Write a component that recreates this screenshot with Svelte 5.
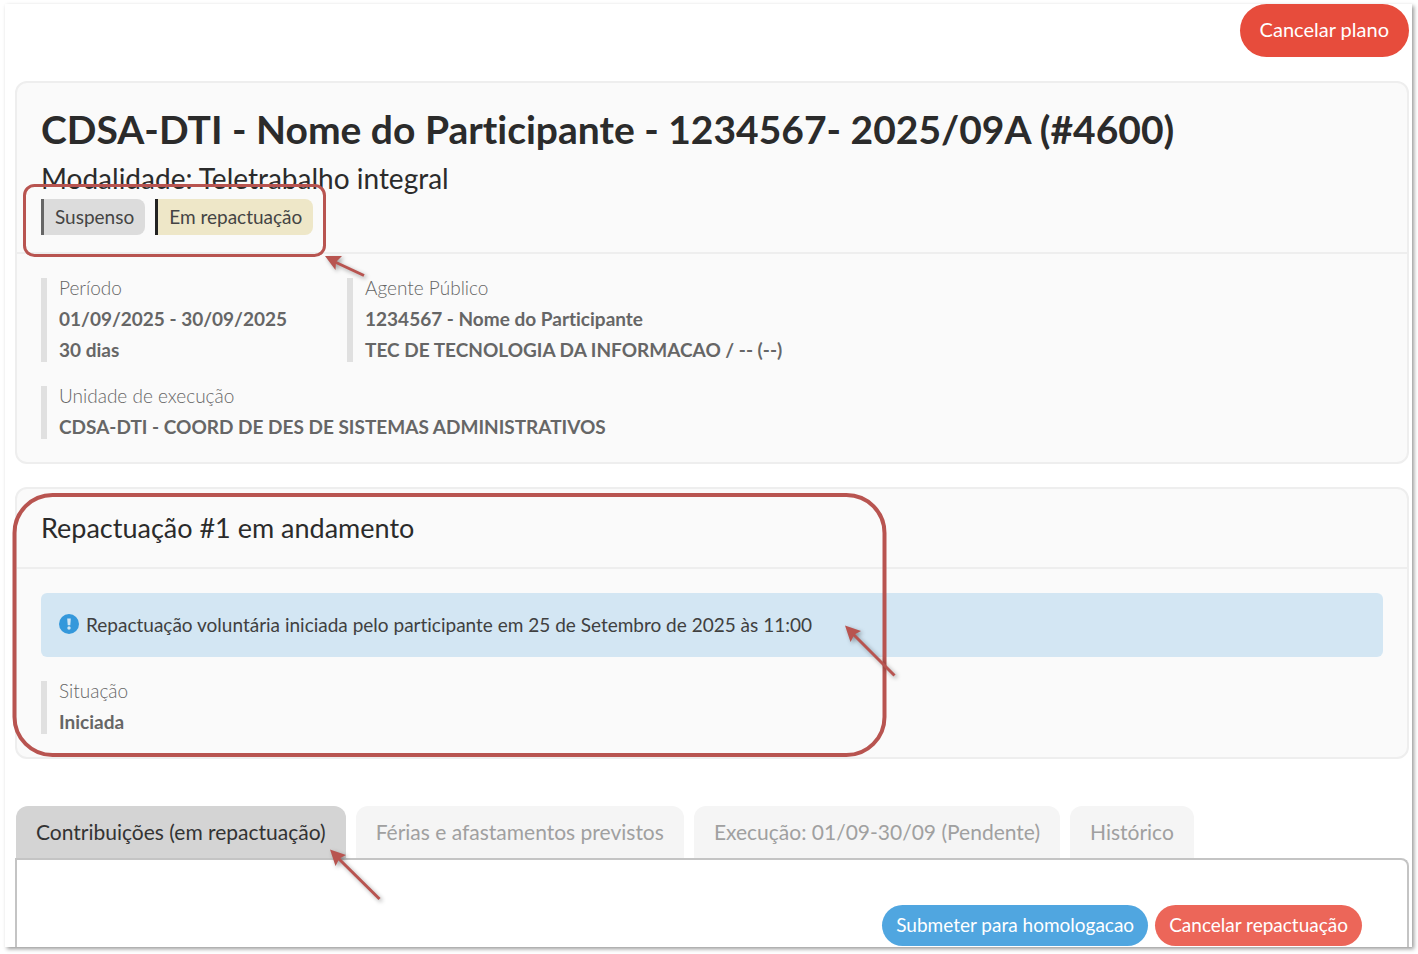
<script>
  const plano = {
    titulo: 'CDSA-DTI - Nome do Participante - 1234567- 2025/09A (#4600)',
    modalidade: 'Modalidade: Teletrabalho integral'
  };

  const campos = [
    [
      { label: 'Período', linhas: ['01/09/2025 - 30/09/2025', '30 dias'] },
      { label: 'Agente Público', linhas: ['1234567 - Nome do Participante', 'TEC DE TECNOLOGIA DA INFORMACAO / -- (--)'] }
    ],
    [
      { label: 'Unidade de execução', linhas: ['CDSA-DTI - COORD DE DES DE SISTEMAS ADMINISTRATIVOS'] }
    ]
  ];

  const situacao = { label: 'Situação', linhas: ['Iniciada'] };

  const abas = [
    'Contribuições (em repactuação)',
    'Férias e afastamentos previstos',
    'Execução: 01/09-30/09 (Pendente)',
    'Histórico'
  ];

  let abaAtiva = $state(0);
</script>

{#snippet campo(item)}
  <dl class="field">
    <dt>{item.label}</dt>
    {#each item.linhas as linha}
      <dd>{linha}</dd>
    {/each}
  </dl>
{/snippet}

<div class="sheet">
  <div class="toolbar">
    <button class="btn btn-large red" type="button">Cancelar plano</button>
  </div>

  <section class="card">
    <header class="plan-header">
      <h1>{plano.titulo}</h1>
      <p class="subtitle">{plano.modalidade}</p>
      <div class="badges">
        <span class="badge">Suspenso</span>
        <span class="badge warning">Em repactuação</span>
      </div>
    </header>
    <div class="card-body">
      {#each campos as linha}
        <div class="row">
          {#each linha as item}
            {@render campo(item)}
          {/each}
        </div>
      {/each}
    </div>
    <svg class="mark" width="360" height="200" aria-hidden="true">
      <rect x="7.5" y="102.5" width="300" height="70" rx="10" stroke-width="3" />
      <g class="arrow">
        <path class="line" d="M347 192.500L318 179" />
        <path class="head" d="M308 173L325 173L319 179L318.500 187Z" />
      </g>
    </svg>
  </section>

  <section class="card">
    <header class="card-header">
      <h2>Repactuação #1 em andamento</h2>
    </header>
    <div class="card-body">
      <div class="message">
        <svg width="20" height="20" viewBox="0 0 20 20" aria-hidden="true">
          <circle cx="10" cy="10" r="10" fill="#3498db" />
          <path d="M8.200 4.500h3.600l-.5 6.800H8.700z" fill="#d3e6f3" />
          <circle cx="10" cy="14" r="1.700" fill="#d3e6f3" />
        </svg>
        <span>Repactuação voluntária iniciada pelo participante em 25 de Setembro de 2025 às 11:00</span>
      </div>
      <div class="row">
        {@render campo(situacao)}
      </div>
    </div>
    <svg class="mark" width="900" height="280" aria-hidden="true">
      <rect x="-2.500" y="6" width="870" height="260" rx="38" stroke-width="4" />
      <g class="arrow">
        <path class="line" d="M877.500 186.500L836 145" />
        <path class="head" d="M828 136.500L844 142L837.500 145.500L833.500 153Z" />
      </g>
    </svg>
  </section>

  <div class="tabs-area">
    <div class="tabs" role="tablist">
      {#each abas as aba, i}
        <button
          class="tab"
          class:active={abaAtiva === i}
          type="button"
          role="tab"
          aria-selected={abaAtiva === i}
          onclick={() => (abaAtiva = i)}
        >{aba}</button>
      {/each}
    </div>
    <div class="panel" role="tabpanel">
      <button class="btn blue" type="button">Submeter para homologacao</button>
      <button class="btn soft-red" type="button">Cancelar repactuação</button>
    </div>
    <svg class="mark" width="380" height="130" aria-hidden="true">
      <g class="arrow">
        <path class="line" d="M364.500 117L323 76" />
        <path class="head" d="M315 67.500L331 73L324.500 76.500L320.500 84Z" />
      </g>
    </svg>
  </div>
</div>

<style>
  :global(body) {
    margin: 0;
    background: #fff;
  }

  .sheet {
    margin: 4px 6px 7px 5px;
    padding: 0 3px 0 10px;
    background: #fff;
    box-shadow: 2px 2px 4px rgba(0, 0, 0, 0.4);
    color: #2b2b2b;
    font-family: Lato, "Liberation Sans", sans-serif;
    font-size: 19px;
    font-variant-ligatures: none;
    line-height: 21px;
  }

  h1, h2, p, dl, dd {
    margin: 0;
  }

  .toolbar {
    display: flex;
    justify-content: flex-end;
    margin-bottom: 24px;
  }

  .btn {
    height: 41px;
    padding: 0 14px 2px;
    border: 0;
    border-radius: 27px;
    color: #fff;
    font: inherit;
    cursor: pointer;
  }

  .btn-large {
    height: 53px;
    padding: 0 20px 2px;
    font-size: 20px;
  }

  .red {
    background: #e74c3c;
  }

  .soft-red {
    background: #ec6659;
  }

  .blue {
    background: #50a6e0;
  }

  .card {
    position: relative;
    margin-bottom: 23px;
    border: 2px solid #eee;
    border-radius: 12px;
    background: #fafafa;
  }

  .plan-header {
    padding: 22px 24px 17px;
    border-bottom: 2px solid #eee;
  }

  h1 {
    font-size: 39px;
    line-height: 48px;
    font-weight: 700;
  }

  .subtitle,
  h2 {
    font-size: 27px;
    line-height: 32px;
    font-weight: 400;
  }

  .subtitle {
    margin: 9px 0 5px;
    font-size: 28px;
  }

  .badges {
    display: flex;
    gap: 10px;
  }

  .badge {
    padding: 0 11px;
    border-left: 3px solid #666;
    border-radius: 0 8px 8px 0;
    background: #dcdcdc;
    color: #444;
    line-height: 36px;
  }

  .badge.warning {
    border-left-color: #222;
    background: #eee7c8;
  }

  .card-header {
    padding: 23px 24px;
    border-bottom: 2px solid #eee;
  }

  .card-body {
    display: flex;
    flex-direction: column;
    gap: 24px;
    padding: 24px 24px 23px;
  }

  .row {
    display: flex;
    gap: 60px;
  }

  .field {
    display: flex;
    flex-direction: column;
    gap: 11px;
    padding: 0 0 2px 12px;
    border-left: 6px solid #e0e0e0;
    color: #666;
    line-height: 20px;
  }

  dt {
    font-weight: 300;
  }

  dd {
    font-weight: 700;
  }

  .message {
    display: flex;
    align-items: center;
    gap: 7px;
    height: 62px;
    padding: 0 18px 2px;
    border-radius: 6px;
    background: #d3e6f3;
    color: #404040;
  }

  .tabs-area {
    position: relative;
    padding-top: 24px;
  }

  .tabs {
    display: flex;
    gap: 10px;
    padding-left: 1px;
  }

  .tab {
    height: 52px;
    padding: 0 20px 2px;
    border: 0;
    border-radius: 12px 12px 0 0;
    background: #f5f5f5;
    color: #a0a0a0;
    font: inherit;
    font-size: 21px;
    cursor: pointer;
  }

  .tab.active {
    background: #d4d4d4;
    color: #333;
  }

  .panel {
    display: flex;
    justify-content: flex-end;
    gap: 7px;
    padding: 45px 45px 1px;
    border: 2px solid #c4c4c4;
    border-bottom: 0;
    border-radius: 0 8px 0 0;
  }

  .mark {
    position: absolute;
    top: 0;
    left: 0;
    overflow: visible;
    pointer-events: none;
  }

  .mark rect {
    fill: none;
    stroke: #b85450;
  }

  .arrow {
    filter: drop-shadow(2px 2px 2px rgba(0, 0, 0, 0.35));
  }

  .line {
    fill: none;
    stroke: #b85450;
    stroke-width: 3;
  }

  .head {
    fill: #b85450;
  }
</style>
